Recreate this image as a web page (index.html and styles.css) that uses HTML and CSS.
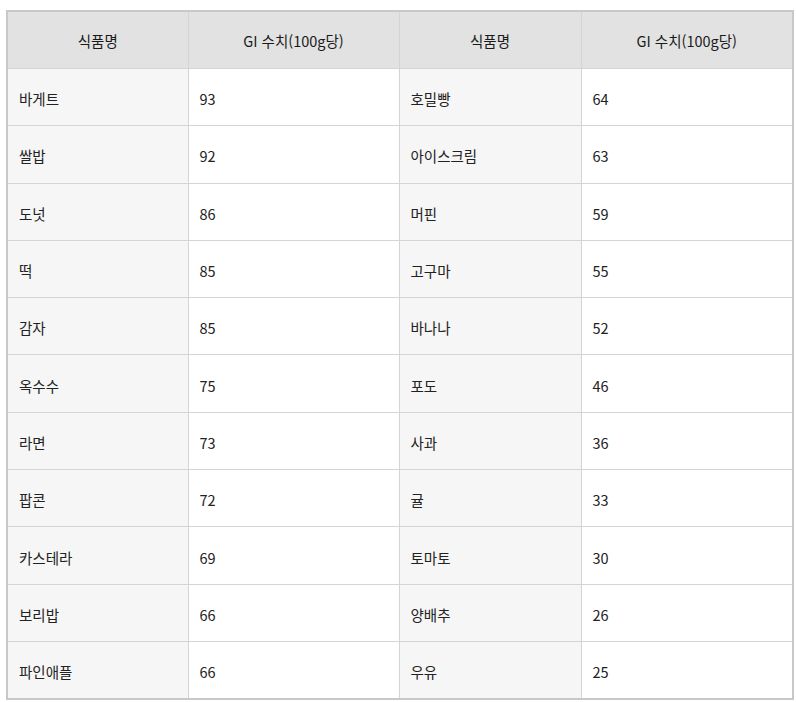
FILE: index.html
```html
<!DOCTYPE html>
<html lang="ko">
<head>
<meta charset="utf-8">
<link rel="stylesheet" href="styles.css">
</head>
<body>
<table class="gi-table">
  <colgroup>
    <col class="c-name1"><col class="c-val1"><col class="c-name2"><col class="c-val2">
  </colgroup>
  <thead>
    <tr><th>식품명</th><th>GI 수치(100g당)</th><th>식품명</th><th>GI 수치(100g당)</th></tr>
  </thead>
  <tbody>
    <tr><td class="name">바게트</td><td>93</td><td class="name">호밀빵</td><td>64</td></tr>
    <tr><td class="name">쌀밥</td><td>92</td><td class="name">아이스크림</td><td>63</td></tr>
    <tr><td class="name">도넛</td><td>86</td><td class="name">머핀</td><td>59</td></tr>
    <tr><td class="name">떡</td><td>85</td><td class="name">고구마</td><td>55</td></tr>
    <tr><td class="name">감자</td><td>85</td><td class="name">바나나</td><td>52</td></tr>
    <tr><td class="name">옥수수</td><td>75</td><td class="name">포도</td><td>46</td></tr>
    <tr><td class="name">라면</td><td>73</td><td class="name">사과</td><td>36</td></tr>
    <tr><td class="name">팝콘</td><td>72</td><td class="name">귤</td><td>33</td></tr>
    <tr><td class="name">카스테라</td><td>69</td><td class="name">토마토</td><td>30</td></tr>
    <tr><td class="name">보리밥</td><td>66</td><td class="name">양배추</td><td>26</td></tr>
    <tr><td class="name">파인애플</td><td>66</td><td class="name">우유</td><td>25</td></tr>
  </tbody>
</table>
</body>
</html>
```
FILE: styles.css
```css
html, body {
  margin: 0;
  padding: 0;
  background: #ffffff;
}
body {
  padding: 10px 0 0 6px;
  font-family: "Noto Sans CJK KR", "Noto Sans", sans-serif;
  font-size: 14.5px;
  color: #222222;
}
.gi-table {
  width: 788px;
  border-collapse: collapse;
  border: 2px solid #c8c8c8;
  table-layout: fixed;
}
.c-name1 { width: 181px; }
.c-val1 { width: 211px; }
.c-name2 { width: 182px; }
.c-val2 { width: 212px; }
.gi-table th,
.gi-table td {
  border: 1px solid #d4d4d4;
  padding: 0 11px;
  line-height: 20px;
  vertical-align: middle;
}
.gi-table th {
  height: 55px;
  padding-top: 1px;
  background: #e2e2e2;
  font-weight: normal;
  text-align: center;
  color: #1a1a1a;
}
.gi-table td {
  height: 52.3px;
  padding-top: 4px;
  text-align: left;
  background: #ffffff;
}
.gi-table td.name {
  background: #f6f6f6;
}
```
